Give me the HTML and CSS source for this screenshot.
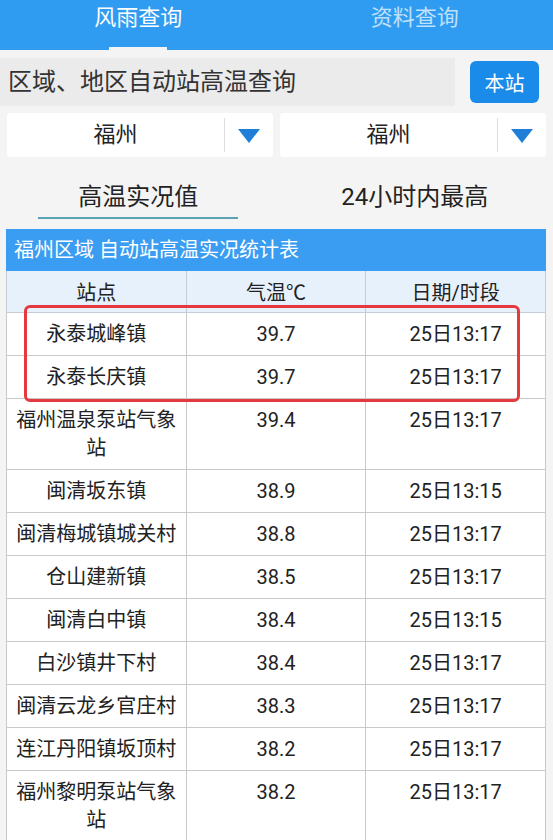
FILE: index.html
```html
<!DOCTYPE html>
<html lang="zh-CN">
<head>
  <meta charset="UTF-8" />
  <meta name="viewport" content="width=device-width, initial-scale=1.0" />
  <title>高温查询</title>
  <link rel="stylesheet" href="styles.css">
</head>
<body>
  <div class="topbar">
    <div class="tab active"><span>风雨查询</span><i class="indicator"></i></div>
    <div class="tab"><span>资料查询</span></div>
  </div>

  <div class="search-row">
    <div class="search-box">区域、地区自动站高温查询</div>
    <button class="local-btn">本站</button>
  </div>

  <div class="select-row">
    <div class="picker">
      <span class="picker-text">福州</span>
      <span class="picker-arrow"><svg width="22" height="14" viewBox="0 0 22 14"><path d="M0 0H22L11 14Z" fill="#1f7fd8"/></svg></span>
    </div>
    <div class="picker">
      <span class="picker-text">福州</span>
      <span class="picker-arrow"><svg width="22" height="14" viewBox="0 0 22 14"><path d="M0 0H22L11 14Z" fill="#1f7fd8"/></svg></span>
    </div>
  </div>

  <div class="sub-tabs">
    <div class="sub-tab active"><span>高温实况值</span></div>
    <div class="sub-tab"><span>24小时内最高</span></div>
  </div>

  <div class="table-wrap">
    <div class="table-title">福州区域 自动站高温实况统计表</div>
    <table class="data-table">
      <thead>
        <tr><th>站点</th><th>气温℃</th><th>日期/时段</th></tr>
      </thead>
      <tbody id="rows"></tbody>
    </table>
    <div class="highlight"></div>
  </div>

  <script>
    const data = [
      ['永泰城峰镇', '39.7', '25日13:17'],
      ['永泰长庆镇', '39.7', '25日13:17'],
      ['福州温泉泵站气象站', '39.4', '25日13:17'],
      ['闽清坂东镇', '38.9', '25日13:15'],
      ['闽清梅城镇城关村', '38.8', '25日13:17'],
      ['仓山建新镇', '38.5', '25日13:17'],
      ['闽清白中镇', '38.4', '25日13:15'],
      ['白沙镇井下村', '38.4', '25日13:17'],
      ['闽清云龙乡官庄村', '38.3', '25日13:17'],
      ['连江丹阳镇坂顶村', '38.2', '25日13:17'],
      ['福州黎明泵站气象站', '38.2', '25日13:17']
    ];
    const tbody = document.getElementById('rows');
    data.forEach(r => {
      const tr = document.createElement('tr');
      tr.innerHTML = `<td>${r[0]}</td><td>${r[1]}</td><td>${r[2]}</td>`;
      tbody.appendChild(tr);
    });
  </script>
</body>
</html>
```

FILE: styles.css
```css
:root {
  --blue: #2f9bf1;
  --btn-blue: #1a8be9;
  --bg: #f4f4f4;
  --line: #c9c9c9;
  --text: #222;
}
body {
  margin: 0;
  background: var(--bg);
  color: var(--text);
  font-family: Roboto, "Noto Sans CJK SC", sans-serif;
  overflow: hidden;
}
.topbar {
  display: flex;
  height: 50px;
  background: var(--blue);
}
.tab {
  flex: 1;
  display: flex;
  flex-direction: column;
  align-items: center;
  font-size: 22px;
  line-height: 36px;
  color: #bfe0fb;
}
.tab.active { color: #fff; }
.indicator {
  margin-top: auto;
  width: 58px;
  height: 3px;
  background: var(--bg);
}
.search-row {
  display: flex;
  align-items: center;
  margin-top: 8px;
}
.search-box {
  width: 447px;
  height: 48px;
  line-height: 48px;
  padding-left: 8px;
  background: #ebebeb;
  font-size: 24px;
  color: #333;
}
.local-btn {
  margin-left: 15px;
  width: 69px;
  height: 42px;
  border: none;
  border-radius: 6px;
  background: var(--btn-blue);
  color: #fff;
  font-size: 20px;
  font-family: inherit;
  padding: 0;
}
.select-row {
  display: flex;
  gap: 7px;
  padding: 7px 7px 0;
}
.picker {
  flex: 1;
  display: flex;
  align-items: center;
  height: 44px;
  background: #fff;
  border-radius: 3px;
}
.picker-text {
  flex: 1;
  text-align: center;
  font-size: 22px;
  line-height: 40px;
  color: #222;
}
.picker-arrow {
  display: flex;
  align-items: center;
  justify-content: center;
  width: 48px;
  height: 34px;
  border-left: 1px solid #ddd;
}
.picker-arrow svg { display: block; margin-top: 2px; }
.sub-tabs {
  display: flex;
  margin-top: 13px;
}
.sub-tab {
  flex: 1;
  display: flex;
  justify-content: center;
  font-size: 24px;
  line-height: 40px;
  color: #222;
}
.sub-tab span {
  display: block;
  width: 200px;
  padding-top: 7px;
  text-align: center;
  border-bottom: 2px solid transparent;
}
.sub-tab.active span { border-bottom-color: #5aa3b3; }
.table-wrap {
  position: relative;
  margin: 10px 7px 0 6px;
}
.table-title {
  height: 42px;
  line-height: 42px;
  padding-left: 8px;
  background: #3a9df1;
  color: #fff;
  font-size: 20px;
}
.data-table {
  width: 100%;
  border-collapse: collapse;
  table-layout: fixed;
  background: #fff;
  font-size: 20px;
}
.data-table th {
  background: #e7f1fc;
  font-weight: normal;
  height: 41px;
  padding: 0;
  border: 1px solid #c5ccd4;
  border-top: none;
}
.data-table td {
  padding: 7px 5px;
  line-height: 28px;
  text-align: center;
  vertical-align: top;
  border: 1px solid var(--line);
}
.highlight {
  position: absolute;
  left: 18px;
  top: 76px;
  width: 490px;
  height: 91px;
  border: 3px solid #e6393f;
  border-radius: 6px;
  pointer-events: none;
}
```
